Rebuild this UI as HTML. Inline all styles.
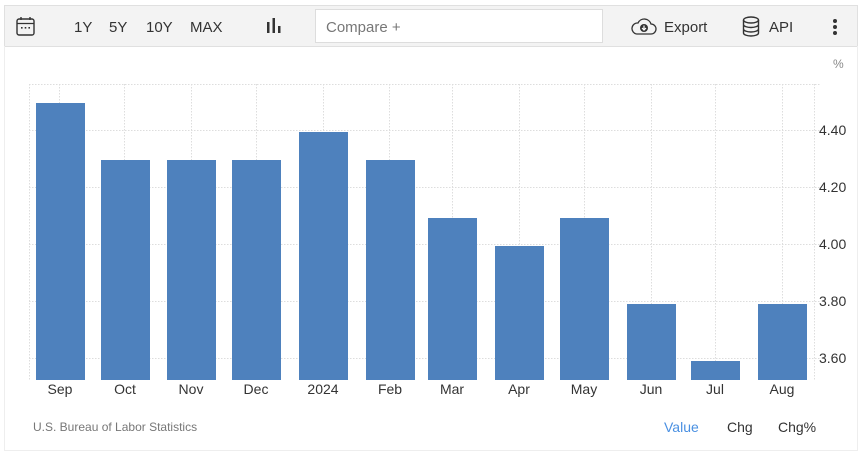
<!DOCTYPE html>
<html><head><style>
*{margin:0;padding:0;box-sizing:border-box}
body{width:860px;height:453px;background:#fff;font-family:"Liberation Sans",sans-serif;position:relative;overflow:hidden}
.tb{position:absolute;left:4px;top:5px;width:854px;height:42px;background:#f3f3f3;border:1px solid #e0e0e0}
.t{position:absolute;font-size:15px;color:#333;top:19px}
.cmp{position:absolute;left:315px;top:9px;width:288px;height:34px;background:#fff;border:1px solid #ddd;font-size:15px;color:#777;padding:9px 10px}
.frame{position:absolute;left:4px;top:46px;width:854px;height:405px;border-left:1px solid #eee;border-right:1px solid #eee;border-bottom:1px solid #eee}
.bar{position:absolute;background:#4e81bd;width:49px;bottom:73px}
.xl{position:absolute;top:381px;font-size:14px;color:#333;width:70px;text-align:center}
.yl{position:absolute;left:819px;font-size:14px;color:#333}
</style></head><body>
<div class="tb"></div>
<div class="frame"></div>
<svg style="position:absolute;left:16px;top:16px" width="20" height="22" viewBox="0 0 20 22"><rect x="1" y="3" width="17" height="16" rx="2" fill="none" stroke="#333" stroke-width="1.4"/><line x1="1" y1="7.5" x2="18" y2="7.5" stroke="#333" stroke-width="1.3"/><line x1="5" y1="1" x2="5" y2="4" stroke="#333" stroke-width="1.4"/><line x1="14" y1="1" x2="14" y2="4" stroke="#333" stroke-width="1.4"/><rect x="5" y="11" width="1.6" height="1.6" fill="#333"/><rect x="8.7" y="11" width="1.6" height="1.6" fill="#333"/><rect x="12.4" y="11" width="1.6" height="1.6" fill="#333"/></svg>
<div class="t" style="left:74px">1Y</div><div class="t" style="left:109px">5Y</div><div class="t" style="left:146px">10Y</div><div class="t" style="left:190px">MAX</div>
<svg style="position:absolute;left:266px;top:18px" width="16" height="16"><rect x="1" y="4" width="2.5" height="11" fill="#333"/><rect x="6.5" y="0" width="2.5" height="15" fill="#333"/><rect x="12" y="8" width="2.5" height="7" fill="#333"/></svg>
<div class="cmp">Compare +</div>
<svg style="position:absolute;left:631px;top:18px" width="26" height="18" viewBox="0 0 26 18"><path d="M6 16H20a5 5 0 0 0 0-10 7 7 0 0 0-13-1A5.5 5.5 0 0 0 6 16z" fill="none" stroke="#333" stroke-width="1.3"/><circle cx="13" cy="10" r="4" fill="#333"/><path d="M13 7.5v4M11 10l2 2 2-2" stroke="#fff" stroke-width="1.2" fill="none"/></svg>
<div class="t" style="left:664px">Export</div>
<svg style="position:absolute;left:742px;top:16px" width="18" height="21" viewBox="0 0 18 21"><ellipse cx="9" cy="4" rx="7.5" ry="3" fill="none" stroke="#333" stroke-width="1.4"/><path d="M1.5 4v13c0 1.7 3.4 3 7.5 3s7.5-1.3 7.5-3V4M1.5 8.5c0 1.7 3.4 3 7.5 3s7.5-1.3 7.5-3M1.5 13c0 1.7 3.4 3 7.5 3s7.5-1.3 7.5-3" fill="none" stroke="#333" stroke-width="1.4"/></svg>
<div class="t" style="left:769px">API</div>
<svg style="position:absolute;left:832px;top:19px" width="6" height="16"><circle cx="3" cy="2" r="2" fill="#333"/><circle cx="3" cy="8" r="2" fill="#333"/><circle cx="3" cy="14" r="2" fill="#333"/></svg>
<div style="position:absolute;left:833px;top:57px;font-size:12px;color:#888">%</div>
<svg style="position:absolute;left:0;top:0" width="860" height="453">
<g stroke="#ddd" stroke-dasharray="1.5,1.5" stroke-width="1">
<line x1="29" y1="84.5" x2="820" y2="84.5"/>
<line x1="29" y1="130.5" x2="820" y2="130.5"/><line x1="29" y1="187.5" x2="820" y2="187.5"/><line x1="29" y1="244.5" x2="820" y2="244.5"/><line x1="29" y1="301.5" x2="820" y2="301.5"/><line x1="29" y1="358.5" x2="820" y2="358.5"/>
<line x1="29.5" y1="84" x2="29.5" y2="380"/>
<line x1="59.5" y1="84" x2="59.5" y2="380"/><line x1="124.5" y1="84" x2="124.5" y2="380"/><line x1="191.5" y1="84" x2="191.5" y2="380"/><line x1="256.5" y1="84" x2="256.5" y2="380"/><line x1="323.5" y1="84" x2="323.5" y2="380"/><line x1="389.5" y1="84" x2="389.5" y2="380"/><line x1="452.5" y1="84" x2="452.5" y2="380"/><line x1="519.5" y1="84" x2="519.5" y2="380"/><line x1="584.5" y1="84" x2="584.5" y2="380"/><line x1="651.5" y1="84" x2="651.5" y2="380"/><line x1="715.5" y1="84" x2="715.5" y2="380"/><line x1="782.5" y1="84" x2="782.5" y2="380"/><line x1="814.5" y1="84" x2="814.5" y2="380"/>
</g></svg>
<div class="bar" style="left:36px;top:103px"></div>
<div class="bar" style="left:101px;top:160px"></div>
<div class="bar" style="left:167px;top:160px"></div>
<div class="bar" style="left:232px;top:160px"></div>
<div class="bar" style="left:299px;top:132px"></div>
<div class="bar" style="left:366px;top:160px"></div>
<div class="bar" style="left:428px;top:218px"></div>
<div class="bar" style="left:495px;top:246px"></div>
<div class="bar" style="left:560px;top:218px"></div>
<div class="bar" style="left:627px;top:304px"></div>
<div class="bar" style="left:691px;top:361px"></div>
<div class="bar" style="left:758px;top:304px"></div>
<div class="xl" style="left:25px">Sep</div><div class="xl" style="left:90px">Oct</div><div class="xl" style="left:156px">Nov</div><div class="xl" style="left:221px">Dec</div><div class="xl" style="left:288px">2024</div><div class="xl" style="left:355px">Feb</div><div class="xl" style="left:417px">Mar</div><div class="xl" style="left:484px">Apr</div><div class="xl" style="left:549px">May</div><div class="xl" style="left:616px">Jun</div><div class="xl" style="left:680px">Jul</div><div class="xl" style="left:747px">Aug</div>
<div class="yl" style="top:122px">4.40</div><div class="yl" style="top:179px">4.20</div><div class="yl" style="top:236px">4.00</div><div class="yl" style="top:293px">3.80</div><div class="yl" style="top:350px">3.60</div>
<div style="position:absolute;left:33px;top:420px;font-size:12px;color:#777">U.S. Bureau of Labor Statistics</div>
<div style="position:absolute;left:664px;top:419px;font-size:14px;color:#4a90e2">Value</div>
<div style="position:absolute;left:727px;top:419px;font-size:14px;color:#333">Chg</div>
<div style="position:absolute;left:778px;top:419px;font-size:14px;color:#333">Chg%</div>
</body></html>
